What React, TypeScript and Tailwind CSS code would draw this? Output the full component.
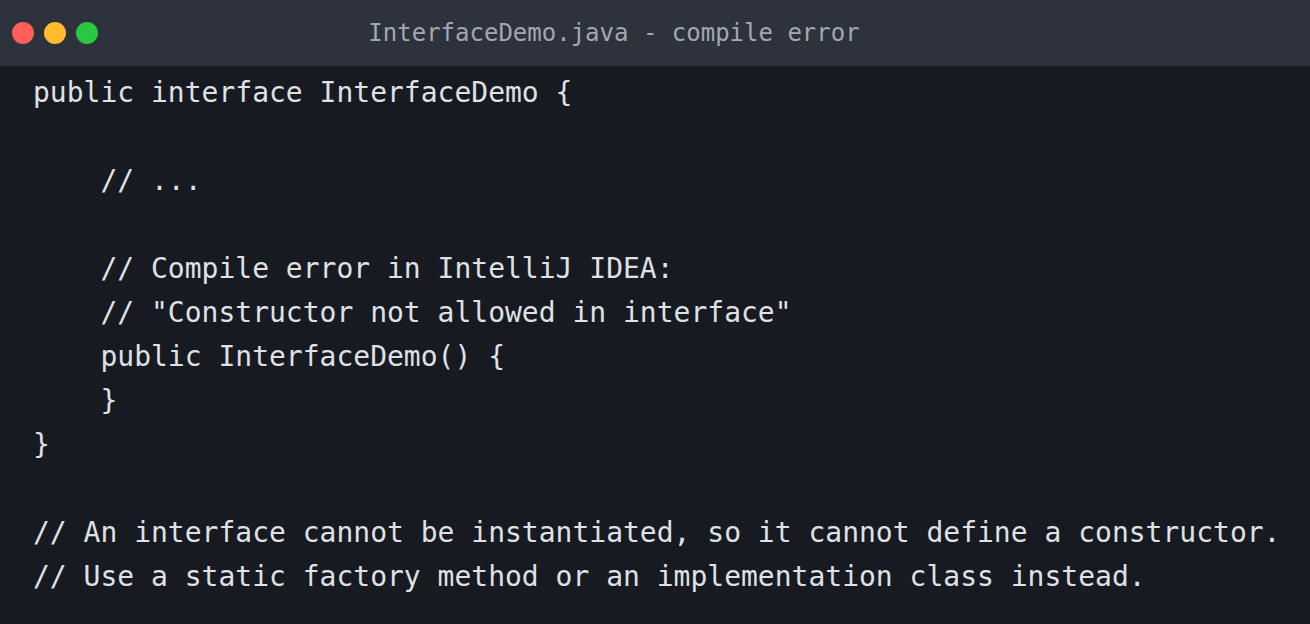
const lines = [
  "public interface InterfaceDemo {",
  "",
  "    // ...",
  "",
  "    // Compile error in IntelliJ IDEA:",
  '    // "Constructor not allowed in interface"',
  "    public InterfaceDemo() {",
  "    }",
  "}",
  "",
  "// An interface cannot be instantiated, so it cannot define a constructor.",
  "// Use a static factory method or an implementation class instead.",
];

export default function App() {
  return (
    <div className="w-[1310px] h-[624px] bg-[#181a21] flex flex-col overflow-hidden">
      {/* Title bar */}
      <header className="relative h-[66px] bg-[#2e323d] flex items-center px-3 shrink-0">
        <div className="flex gap-[10px]">
          <span className="w-[22px] h-[22px] rounded-full bg-[#fe5f57]" />
          <span className="w-[22px] h-[22px] rounded-full bg-[#febc2e]" />
          <span className="w-[22px] h-[22px] rounded-full bg-[#28c840]" />
        </div>
        <div className="absolute inset-0 flex items-center justify-center pr-[82px] pointer-events-none">
          <span className="font-['DejaVu_Sans_Mono',monospace] text-[24px] text-[#a3a7b0]">
            InterfaceDemo.java - compile error
          </span>
        </div>
      </header>

      {/* Code */}
      <pre className="font-['DejaVu_Sans_Mono',monospace] text-[28px] leading-[44px] text-[#dfe1e6] pl-[33px] pt-[5px]">
        {lines.map((l, i) => (
          <div key={i} className="h-[44px]">
            {l}
          </div>
        ))}
      </pre>
    </div>
  );
}
